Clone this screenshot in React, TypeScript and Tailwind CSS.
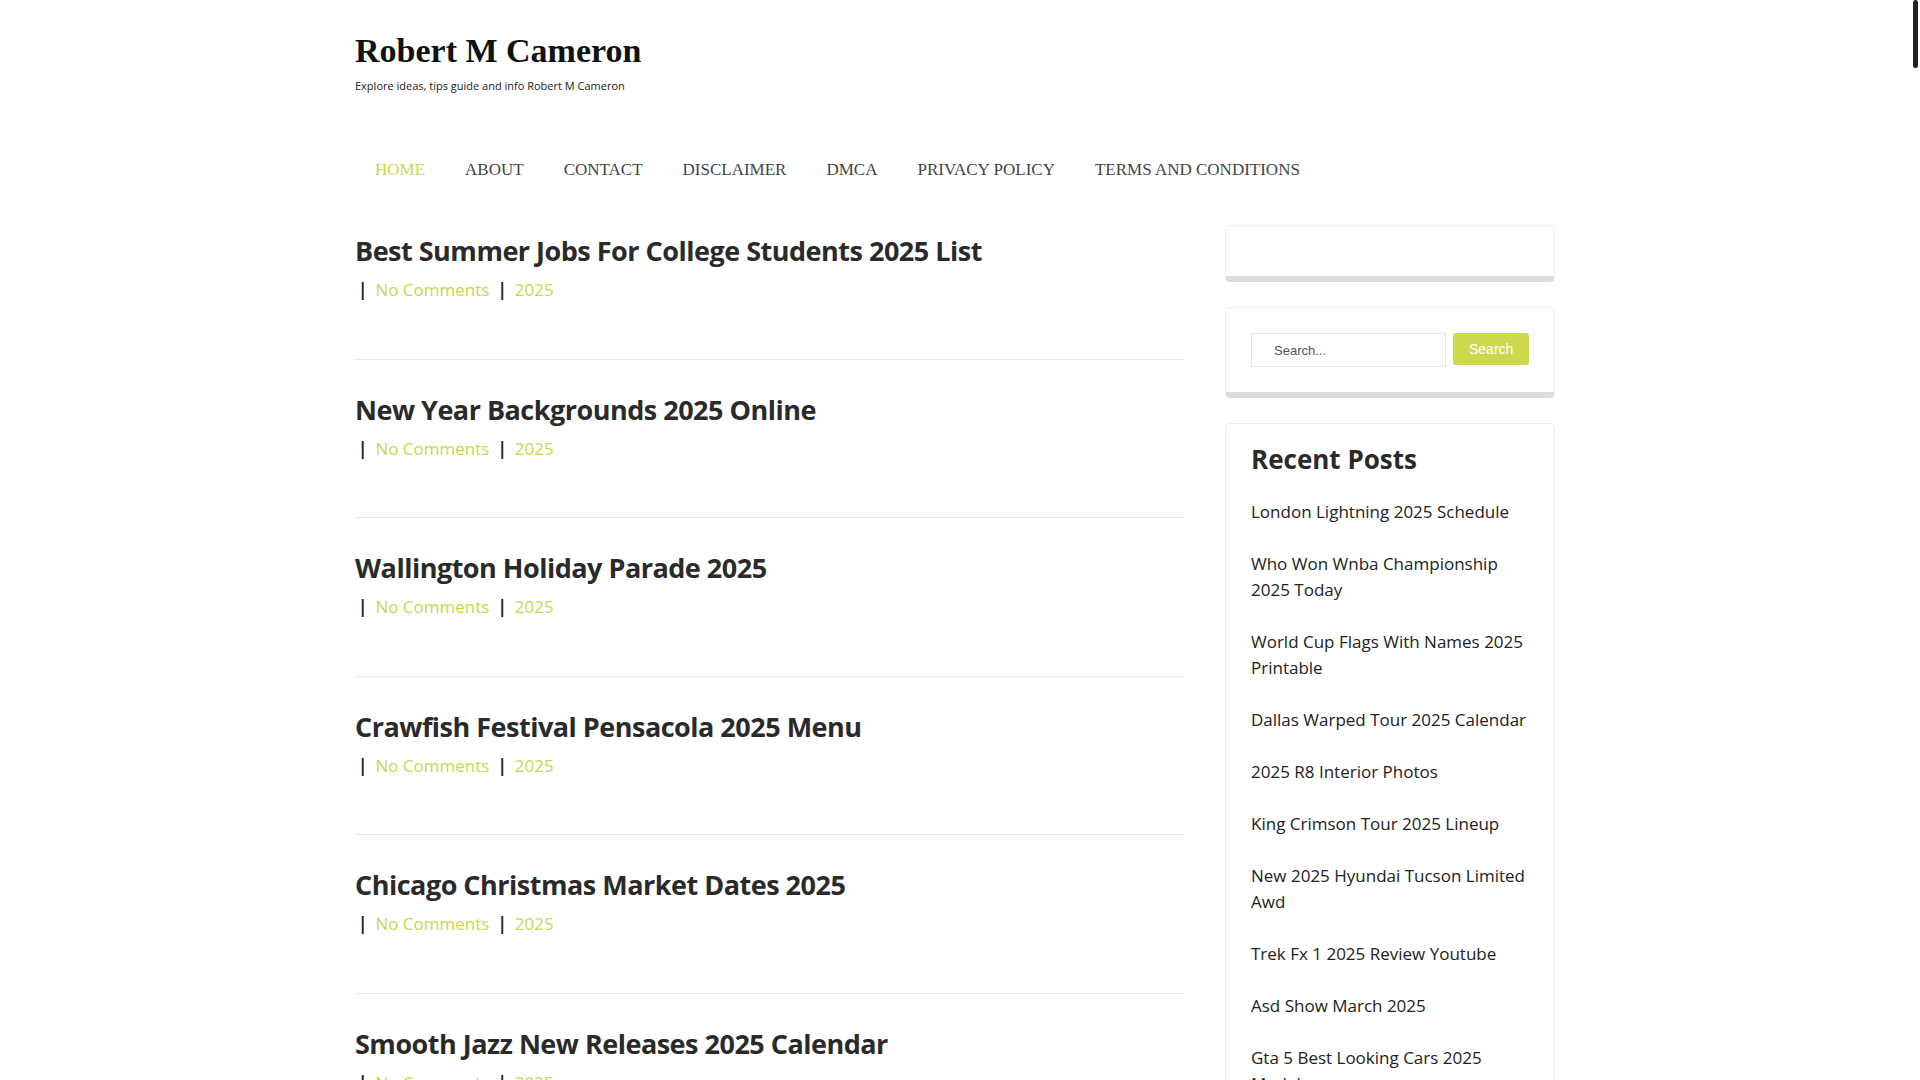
export default function App() {
  const nav = ["HOME", "ABOUT", "CONTACT", "DISCLAIMER", "DMCA", "PRIVACY POLICY", "TERMS AND CONDITIONS"];
  const posts = [
    "Best Summer Jobs For College Students 2025 List",
    "New Year Backgrounds 2025 Online",
    "Wallington Holiday Parade 2025",
    "Crawfish Festival Pensacola 2025 Menu",
    "Chicago Christmas Market Dates 2025",
    "Smooth Jazz New Releases 2025 Calendar",
  ];
  const recent = [
    "London Lightning 2025 Schedule",
    "Who Won Wnba Championship 2025 Today",
    "World Cup Flags With Names 2025 Printable",
    "Dallas Warped Tour 2025 Calendar",
    "2025 R8 Interior Photos",
    "King Crimson Tour 2025 Lineup",
    "New 2025 Hyundai Tucson Limited Awd",
    "Trek Fx 1 2025 Review Youtube",
    "Asd Show March 2025",
    "Gta 5 Best Looking Cars 2025 Models",
  ];
  const sans = { fontFamily: "'Open Sans', Lato, sans-serif" };
  return (
    <div className="h-[1080px] overflow-hidden bg-white relative" style={sans}>
      <div className="absolute right-[2px] top-0 w-[5px] h-[68px] bg-[#222] rounded-full" />
      <div className="w-[1210px] pr-[10px] mx-auto">
        <div className="pt-[30px]">
          <div className="text-[34px] font-bold text-[#111] leading-[42px]" style={{ fontFamily: "'Liberation Serif', serif" }}>Robert M Cameron</div>
          <div className="text-[11px] text-[#222] mt-[6px]">Explore ideas, tips guide and info Robert M Cameron</div>
        </div>
        <nav className="flex mt-[54px] text-[17px] text-[#444]" style={{ fontFamily: "'Liberation Serif', serif" }}>
          {nav.map((n, i) => (
            <div key={n} className={"px-[20px] py-[8px] " + (i === 0 ? "text-[#c9d64a]" : "")}>{n}</div>
          ))}
        </nav>
        <div className="flex gap-[40px] mt-[35px]">
          <div className="w-[830px]">
            {posts.map((p, i) => (
              <div key={p} className={"border-b border-[#e8e8e8] pb-[56px] mb-[32px] " + (i === 0 ? "pt-[8px]" : "")}>
                <div className="text-[27px] font-bold text-[#2a2a2a] tracking-[-0.5px] leading-[36px]">{p}</div>
                <div className="text-[17px] mt-[8px] flex items-center gap-[8px]">
                  <span className="text-[#222] font-bold pl-[3px]">|</span>
                  <span className="text-[#c9d64a]">No Comments</span>
                  <span className="text-[#222] font-bold">|</span>
                  <span className="text-[#c9d64a]">2025</span>
                </div>
              </div>
            ))}
          </div>
          <div className="w-[330px] flex flex-col gap-[25px]">
            <div className="h-[57px] border border-[#eee] border-b-[6px] border-b-[#dcdcdc] rounded-[5px]" />
            <div className="h-[91px] border border-[#eee] border-b-[6px] border-b-[#dcdcdc] rounded-[5px] px-[25px] pt-[25px] flex gap-[7px] items-start">
              <input placeholder="Search..." className="w-[195px] h-[34px] border border-[#e5e5e5] px-[22px] text-[13px] placeholder-[#555] outline-none" style={{ fontFamily: "'Liberation Sans', sans-serif" }} />
              <button className="h-[32px] px-[16px] bg-[#cdd84f] text-white text-[14px] rounded-[3px]" style={{ fontFamily: "'Liberation Sans', sans-serif" }}>Search</button>
            </div>
            <div className="border border-[#eee] rounded-[5px] px-[25px] pt-[16px]">
              <div className="text-[26px] font-bold text-[#2a2a2a] mb-[20px]">Recent Posts</div>
              {recent.map((r) => (
                <div key={r} className="text-[17px] text-[#222] leading-[26px] mb-[26px]">{r}</div>
              ))}
            </div>
          </div>
        </div>
      </div>
    </div>
  );
}
